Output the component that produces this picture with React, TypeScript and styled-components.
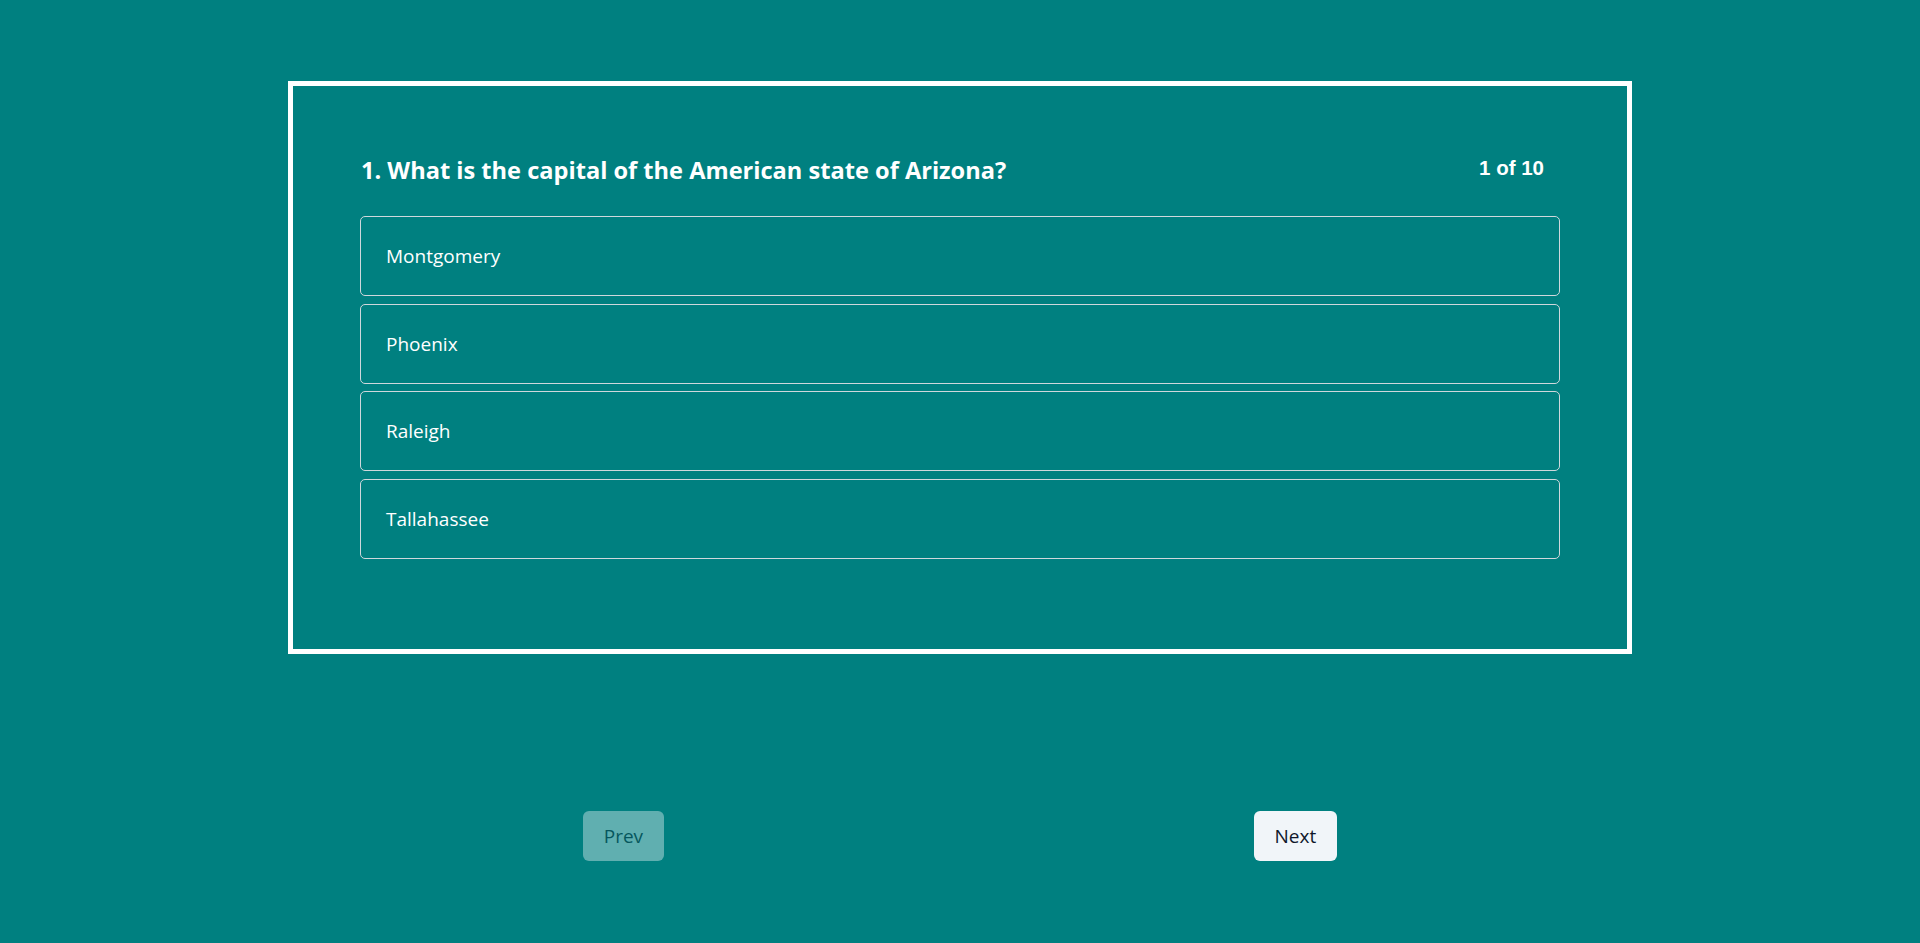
import React from "react";
import styled, { createGlobalStyle } from "styled-components";

const GlobalStyle = createGlobalStyle`
  html, body {
    margin: 0;
    padding: 0;
    background: #008080;
  }
  body {
    font-family: "Open Sans", "Noto Sans", sans-serif;
  }
  * { box-sizing: border-box; }
`;

const Page = styled.div`
  min-height: 100vh;
  background: #008080;
  padding-top: 81px;
  display: flex;
  flex-direction: column;
  align-items: center;
`;

const Card = styled.section`
  width: 1344px;
  border: 5px solid #ffffff;
  padding: 64px 0 90px;
`;

const Content = styled.div`
  width: 1200px;
  margin: 0 auto;
`;

const Header = styled.div`
  display: flex;
  justify-content: space-between;
  align-items: center;
  height: 36px;
  margin-bottom: 30px;
  padding-right: 16px;
`;

const Question = styled.h2`
  margin: 0;
  padding: 4px 0 0 1px;
  font-family: "Open Sans", "Noto Sans", sans-serif;
  font-weight: 700;
  font-size: 23.6px;
  color: #ffffff;
`;

const Counter = styled.span`
  font-family: "Liberation Sans", Arial, sans-serif;
  font-weight: 700;
  font-size: 20.5px;
  color: #ffffff;
`;

const Options = styled.ul`
  list-style: none;
  margin: 0;
  padding: 0;
  display: flex;
  flex-direction: column;
  gap: 7.5px;
`;

const Option = styled.li`
  height: 80px;
  display: flex;
  align-items: center;
  padding: 0 25px;
  border: 1px solid #cfd8dc;
  border-radius: 5px;
  color: #ffffff;
  font-family: "Open Sans", "Noto Sans", sans-serif;
  font-size: 19px;
  cursor: pointer;
`;

const Nav = styled.nav`
  width: 1344px;
  margin-top: 157px;
  display: flex;
  justify-content: space-around;
`;

const NavButton = styled.button<{ $disabled?: boolean }>`
  height: 50px;
  padding: 0 21px;
  border: none;
  border-radius: 6px;
  background: #f1f5f9;
  color: #0f172a;
  font-family: "Open Sans", "Noto Sans", sans-serif;
  font-size: 19px;
  font-weight: 500;
  opacity: ${(p) => (p.$disabled ? 0.4 : 1)};
  cursor: ${(p) => (p.$disabled ? "default" : "pointer")};
`;

const options = ["Montgomery", "Phoenix", "Raleigh", "Tallahassee"];

export default function App() {
  return (
    <>
      <GlobalStyle />
      <Page>
        <Card>
          <Content>
            <Header>
              <Question>1. What is the capital of the American state of Arizona?</Question>
              <Counter>1 of 10</Counter>
            </Header>
            <Options>
              {options.map((o) => (
                <Option key={o}>{o}</Option>
              ))}
            </Options>
          </Content>
        </Card>
        <Nav>
          <NavButton $disabled disabled>
            Prev
          </NavButton>
          <NavButton>Next</NavButton>
        </Nav>
      </Page>
    </>
  );
}
